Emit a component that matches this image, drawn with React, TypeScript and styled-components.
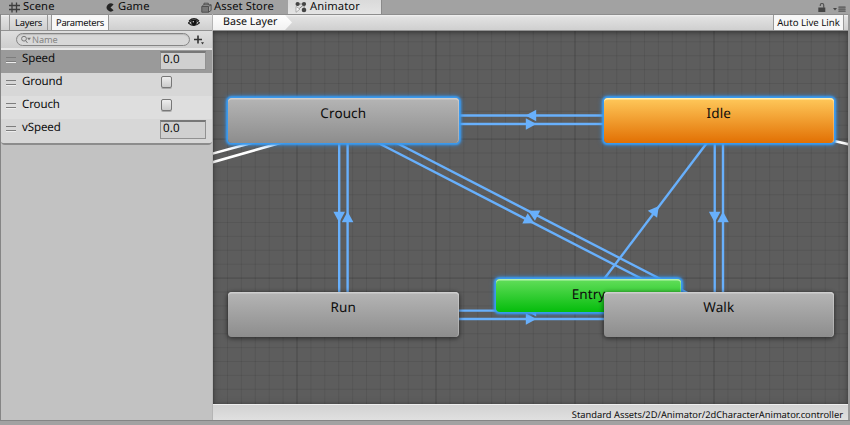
import React from "react";
import styled, { createGlobalStyle } from "styled-components";

const Global = createGlobalStyle`
  * { box-sizing: border-box; }
  body { margin: 0; overflow: hidden; font-family: "Noto Sans", "Open Sans", sans-serif; color: #0c0c0c;
    text-rendering: geometricPrecision; }
`;

const Window = styled.div`
  width: 850px; height: 425px; display: flex; flex-direction: column;
  background: #a2a2a2; overflow: hidden;
`;
const TabBar = styled.div`
  display: flex; height: 14px; flex: none; background: #a2a2a2; padding-left: 9px;
`;
const Tab = styled.div<{ $w: number; $active?: boolean; $gap: number }>`
  width: ${p => p.$w}px; height: 14px; display: flex; align-items: center; gap: ${p => p.$gap}px;
  padding-left: ${p => (p.$active ? 7 : 0)}px;
  font-size: 11.2px; line-height: 14px; letter-spacing: .1px; white-space: nowrap;
  background: ${p => (p.$active ? "linear-gradient(#dadada,#e4e4e4)" : "transparent")};
  border-right: ${p => (p.$active ? "1px solid #8a8a8a" : "none")};
  svg { flex: none; }
`;
const TabTitle = styled.span`height: 14px; line-height: 13px;`;
const TabTools = styled.div`
  margin-left: auto; display: flex; align-items: flex-end; gap: 7px; padding: 0 4px 1px 0;
`;
const Main = styled.div`display: flex; height: 407px; flex: none; border-bottom: 1px solid #858585;`;
const Side = styled.div`
  width: 213px; display: flex; flex-direction: column; background: #c2c2c2;
  border-left: 1px solid #858585; border-right: 1px solid #b5b5b5;
`;
const Bar = styled.div`
  height: 17px; flex: none; display: flex;
  background: linear-gradient(#f2f2f2 0, #e2e2e2 2px, #cfcfcf 100%);
  border-bottom: 1px solid #929292; border-top: 1px solid #8e8e8e;
`;
const SideTab = styled.div<{ $w: number; $on?: boolean }>`
  width: ${p => p.$w}px; font-size: 9.4px; line-height: 16px; text-align: center; letter-spacing: -.3px;
  border-right: 1px solid #979797; background: ${p => (p.$on ? "#f8f8f8" : "transparent")};
`;
const EyeSlot = styled.div`margin-left: auto; width: 24px; display: flex; align-items: center;`;
const SearchRow = styled.div`
  height: 17px; flex: none; display: flex; align-items: center; padding-left: 15px; gap: 4px;
  background: linear-gradient(#dedede,#cecece);
`;
const Search = styled.div`
  width: 174px; height: 13px; display: flex; align-items: center; gap: 1px; padding-left: 4px;
  border: 1px solid #858585; border-radius: 7px; background: #d8d8d8;
  box-shadow: inset 0 1px 1px #bcbcbc; color: #858585; font-size: 9.2px; line-height: 10px; letter-spacing: -.1px;
`;
const List = styled.div`
  border-top: 2px solid #e8e8e8; border-bottom: 2px solid #8c8c8c; border-radius: 0 0 4px 4px;
  overflow: hidden;
`;
const Row = styled.div<{ $bg: string; $h: number }>`
  height: ${p => p.$h}px; display: flex; background: ${p => p.$bg}; padding: 0 7px 0 5px;
`;
const Grip = styled.div`
  flex: none; width: 10px; height: 5px; margin: 7px 6px 0 0; border-top: 1px solid #7d7d7d; border-bottom: 1px solid #7d7d7d;
  box-shadow: 0 1px 0 #eee;
`;
const Label = styled.div`flex: none; width: 138px; font-size: 11.5px; line-height: 18px; letter-spacing: -.1px;`;
const Field = styled.div`
  flex: none; width: 46px; height: 19px; margin-top: 1px; padding-left: 2px; font-size: 11.6px; line-height: 13px;
  letter-spacing: .1px; background: #d0d0d0; border: 1px solid #919191; border-top: 2px solid #777;
`;
const Check = styled.div`
  width: 11px; height: 12px; margin: 3px 0 0 1px; border: 1px solid #777; border-radius: 2px;
  background: linear-gradient(#eee,#cbcbcb); box-shadow: 0 1px 0 #aaa;
`;
const Stage = styled.div`flex: 1; display: flex; flex-direction: column; border-right: 2px solid #9a9a9a;`;
const Crumb = styled.div`
  width: 79px; padding-left: 10px; font-size: 10.7px; line-height: 14px; letter-spacing: 0; white-space: nowrap;
  background: linear-gradient(#fff,#f1f1f1); clip-path: polygon(0 0, 72px 0, 79px 50%, 72px 100%, 0 100%);
`;
const LiveLink = styled.div`
  margin: 0 4px 0 auto; width: 71px; text-align: center; font-size: 9.6px; line-height: 15px; letter-spacing: 0;
  white-space: nowrap; background: #f7f7f7; border-left: 1px solid #999; border-right: 1px solid #999;
`;
const Canvas = styled.div`position: relative; height: 374px; background: #5d5d5d; overflow: hidden;`;
const Graph = styled.svg`display: block;`;
const Shade = styled.div`
  position: absolute; inset: 0; box-shadow: inset 0 2px 4px rgba(0,0,0,.3), inset 0 0 8px rgba(0,0,0,.15);
`;
const tones = {
  gray: ["#b5b5b5", "#8d8d8d", "#cecece"],
  orange: ["#ffc95b", "#e27003", "#fff0b4"],
  green: ["#63de5b", "#05bd0c", "#b4f3ad"],
};
const Node = styled.div<{ $x: number; $y: number; $w: number; $h: number; $tone: keyof typeof tones; $glow?: boolean }>`
  position: absolute; left: ${p => p.$x}px; top: ${p => p.$y}px; width: ${p => p.$w}px; height: ${p => p.$h}px;
  border-radius: 4px; text-align: center; font-size: 13.5px; line-height: 31px; letter-spacing: .1px;
  background: linear-gradient(${p => tones[p.$tone][0]}, ${p => tones[p.$tone][1]});
  box-shadow: inset 0 1.5px 0 ${p => tones[p.$tone][2]}, inset -1px 0 0 rgba(255,255,255,.25),
    ${p => (p.$glow ? "0 0 2px 1.2px #3a9bf2, 0 0 5px 2px rgba(50,140,225,.7)" : "0 1px 4px 1px rgba(0,0,0,.45)")};
`;
const Footer = styled.div`
  height: 16px; padding: 2px 5px 0 0; text-align: right; font-size: 9.3px; line-height: 15px; letter-spacing: 0;
  background: linear-gradient(#d2d2d2,#e0e0e0); border-top: 1px solid #eee;
`;

const minor = 13.9;
const gridX = Array.from({ length: 46 }, (_, i) => ({ at: 213.6 + i * minor, major: i % 10 === 6 }));
const gridY = Array.from({ length: 27 }, (_, i) => ({ at: 41.8 + i * minor, major: i % 10 === 7 }));

const lines = [
  [458, 115.5, 604, 115.5], [458, 124, 604, 124],
  [339.2, 142, 339.2, 293], [347.6, 142, 347.6, 293],
  [714.7, 142, 714.7, 293], [723, 142, 723, 293],
  [458, 310.6, 604, 310.6], [458, 319, 604, 319],
  [341, 123.7, 717.1, 317.7], [344.9, 116.3, 721, 310.3],
  [592, 295, 707.6, 142],
];
const arrows: [number, number, number][] = [
  [531, 115.5, 180], [531, 124, 0], [339.2, 217, 90], [347.6, 217, -90],
  [714.7, 217, 90], [723, 217, -90], [531, 310.6, 180], [531, 319, 0],
  [529.6, 220.8, 27.3], [533, 213.3, 207.3], [655.6, 210.2, -52.9],
];

const Icon = {
  Grid: () => <svg width="11" height="11" viewBox="0 0 11 11"><path d="M3 0.500v10M7.500 0.500v10M0 3.500h11M0 7.500h11" stroke="#3d3d3d" strokeWidth="1.300" fill="none" /></svg>,
  Pac: () => <svg width="9" height="11" viewBox="0 0 9 11"><path d="M7.6 2.6A4 4 0 1 0 7.6 8.2L4.5 5.4z" fill="#242424" /></svg>,
  Store: () => <svg width="11" height="11" viewBox="0 0 11 11"><path d="M.8 4.5h6.7v5.7H.8z" fill="#777" /><path d="M.8 4.5h6.7v5.7H.8zM7.5 4.5l2.6-1.7v5.6l-2.6 1.8M.8 4.5l2-1.7h7.3M3 3V1.2h4.3V3" stroke="#505050" fill="none" /></svg>,
  Animator: () => <svg width="12" height="12" viewBox="0 0 12 12"><path d="M2.6 3h6.500v6M2.500 9l6-5" stroke="#8a8a8a" fill="none" /><circle cx="2.6" cy="3" r="2.1" fill="#444" /><circle cx="9" cy="3" r="2.1" fill="#444" /><circle cx="9" cy="9" r="2.3" fill="#444" /><path d="M1 5.500v5.800l4-3.200z" fill="#f5f5f5" stroke="#888" strokeWidth=".6" /></svg>,
  Lock: () => <svg width="8" height="10" viewBox="0 0 8 10"><path d="M.3 4.500h7v4.500h-7z" fill="#444" /><path d="M2.300 3V2.200A1.700 1.700 0 0 1 5.700 2.200V5" stroke="#555" strokeWidth="1.200" fill="none" /></svg>,
  Menu: () => <svg width="13" height="8" viewBox="0 0 13 8"><path d="M0 3h4L2 5.500z" fill="#444" /><path d="M5.500 1h7v6h-7z" fill="#777" /><path d="M5.500 2.500h7M5.500 4.500h7M5.500 6.500h7" stroke="#606060" strokeWidth=".7" /></svg>,
  Eye: () => <svg width="12" height="9" viewBox="0 0 12 9"><path d="M.4 5Q5.500-.5 11.500 4.800Q6 10 .4 5z" fill="#d0d0d0" stroke="#222" strokeWidth="1.100" /><path d="M1 3Q6-1.500 11 3" stroke="#222" fill="none" strokeWidth="1.200" /><circle cx="6" cy="4.600" r="2.800" fill="#111" /><circle cx="5.300" cy="3.800" r=".7" fill="#ddd" /></svg>,
  Find: () => <svg width="10" height="9" viewBox="0 0 10 9"><circle cx="3" cy="3.700" r="2.400" stroke="#777" fill="none" /><path d="M4.600 5.500L6.500 8" stroke="#777" /><path d="M6 2.800h4L8 5.300z" fill="#777" /></svg>,
  Plus: () => <svg width="11" height="11" viewBox="0 0 11 11"><path d="M0 5.500h8M4 1.500v8" stroke="#333" strokeWidth="1.600" /><path d="M7 8.300h3L8.500 10.500z" fill="#333" /></svg>,
};

const params = [
  { name: "Speed", value: "0.0", bg: "#9a9a9a", h: 22 },
  { name: "Ground", bg: "#d7d7d7", h: 23 },
  { name: "Crouch", bg: "#dedede", h: 23 },
  { name: "vSpeed", value: "0.0", bg: "#d7d7d7", h: 24 },
];

export default function App() {
  return (
    <Window>
      <Global />
      <TabBar>
        <Tab $w={97} $gap={3}><Icon.Grid /><TabTitle>Scene</TabTitle></Tab>
        <Tab $w={95} $gap={3}><Icon.Pac /><TabTitle>Game</TabTitle></Tab>
        <Tab $w={87} $gap={2}><Icon.Store /><TabTitle>Asset Store</TabTitle></Tab>
        <Tab $w={94} $gap={3} $active><Icon.Animator /><TabTitle>Animator</TabTitle></Tab>
        <TabTools><Icon.Lock /><Icon.Menu /></TabTools>
      </TabBar>
      <Main>
        <Side>
          <Bar>
            <SideTab $w={9} />
            <SideTab $w={38}>Layers</SideTab>
            <SideTab $w={4} />
            <SideTab $w={57} $on>Parameters</SideTab>
            <EyeSlot><Icon.Eye /></EyeSlot>
          </Bar>
          <SearchRow><Search><Icon.Find />Name</Search><Icon.Plus /></SearchRow>
          <List>
            {params.map((p, i) => (
              <Row key={p.name} $bg={p.bg} $h={i === 0 ? p.h + 1 : p.h}>
                <Grip /><Label>{p.name}</Label>
                {p.value ? <Field>{p.value}</Field> : <Check />}
              </Row>
            ))}
          </List>
        </Side>
        <Stage>
          <Bar><Crumb>Base Layer</Crumb><LiveLink>Auto Live Link</LiveLink></Bar>
          <Canvas>
            <Graph width="635" height="374" viewBox="213 31 635 374">
              {gridX.map((g, i) => <path key={"x" + i} d={`M${g.at} 31v374`} stroke="#000" strokeOpacity={g.major ? 0.2 : 0.07} />)}
              {gridY.map((g, i) => <path key={"y" + i} d={`M213 ${g.at}h635`} stroke="#000" strokeOpacity={g.major ? 0.2 : 0.07} />)}
              <g stroke="#fff" strokeWidth="2.500">
                <path d="M211 154L255 142M211 162.700L287 141M832 140.500L850 144.600" />
              </g>
              {lines.map(([x1, y1, x2, y2], i) => <line key={i} x1={x1} y1={y1} x2={x2} y2={y2} stroke="#68b0fc" strokeWidth="2.400" />)}
              {arrows.map(([x, y, a], i) => <path key={"a" + i} d="M-5.200 -5.800L5.400 0L-5.200 5.800z" fill="#68b0fc" transform={`translate(${x} ${y}) rotate(${a})`} />)}
            </Graph>
            <Shade />
            <Node $x={15} $y={67} $w={230.5} $h={45} $tone="gray" $glow>Crouch</Node>
            <Node $x={390.5} $y={67} $w={230.5} $h={45} $tone="orange" $glow>Idle</Node>
            <Node $x={283} $y={248} $w={185} $h={33} $tone="green" $glow>Entry</Node>
            <Node $x={15} $y={261} $w={230.5} $h={45} $tone="gray">Run</Node>
            <Node $x={390.5} $y={261} $w={230.5} $h={45} $tone="gray">Walk</Node>
          </Canvas>
          <Footer>Standard Assets/2D/Animator/2dCharacterAnimator.controller</Footer>
        </Stage>
      </Main>
    </Window>
  );
}
